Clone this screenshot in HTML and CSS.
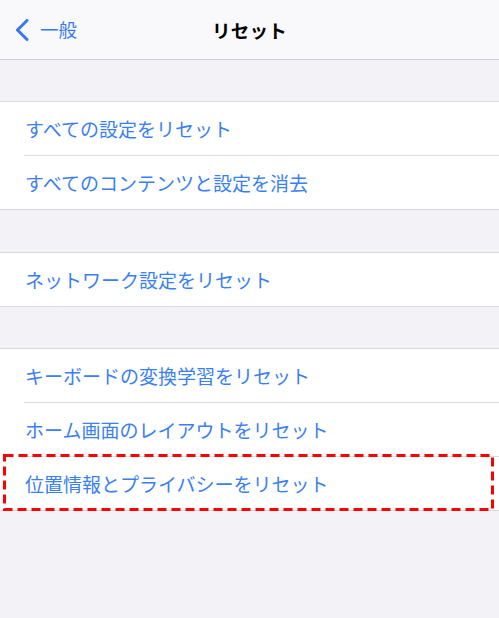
FILE: index.html
```html
<!DOCTYPE html>
<html lang="ja">
<head>
<meta charset="utf-8">
<link rel="stylesheet" href="styles.css">
</head>
<body>
<div class="page">
  <header class="nav">
    <div class="back">
      <svg class="chev" width="14" height="22" viewBox="0 0 14 22"><path d="M12 1.5 L2.5 11 L12 20.5" fill="none" stroke="#3478f6" stroke-width="3" stroke-linecap="round" stroke-linejoin="round"/></svg>
      <span class="back-label">一般</span>
    </div>
    <div class="title">リセット</div>
  </header>
  <div class="gap first"></div>
  <section class="group">
    <div class="row"><span>すべての設定をリセット</span></div>
    <div class="row"><span>すべてのコンテンツと設定を消去</span></div>
  </section>
  <div class="gap"></div>
  <section class="group">
    <div class="row"><span>ネットワーク設定をリセット</span></div>
  </section>
  <div class="gap last"></div>
  <section class="group">
    <div class="row"><span>キーボードの変換学習をリセット</span></div>
    <div class="row"><span>ホーム画面のレイアウトをリセット</span></div>
    <div class="row highlighted"><span>位置情報とプライバシーをリセット</span>
      <svg class="mark" width="491" height="57" viewBox="0 0 491 57"><rect x="1.5" y="1.5" width="488" height="54" fill="none" stroke="#f00" stroke-width="3" stroke-dasharray="9 5"/></svg>
    </div>
  </section>
</div>
</body>
</html>
```

FILE: styles.css
```css
html, body {
  margin: 0;
  padding: 0;
  background: #f2f2f7;
}
.page {
  width: 499px;
  height: 618px;
  overflow: hidden;
  font-family: "Noto Sans CJK JP", "Noto Sans", sans-serif;
  background: #f2f2f7;
}
.nav {
  height: 59px;
  background: #f9f9fb;
  border-bottom: 1px solid #d0d0d4;
  display: flex;
  align-items: center;
  justify-content: center;
  position: relative;
}
.back {
  position: absolute;
  left: 15px;
  top: 0;
  height: 59px;
  display: flex;
  align-items: center;
  gap: 11px;
  color: #3478f6;
  font-size: 18.5px;
}
.chev {
  display: block;
  margin-top: 1px;
}
.back-label {
  line-height: 1;
}
.title {
  font-size: 18.5px;
  font-weight: 700;
  color: #000;
  letter-spacing: 0.3px;
}
.gap {
  height: 42px;
}
.gap.first {
  height: 41px;
}
.gap.last {
  height: 41px;
}
.group {
  background: #fff;
  border-top: 1px solid #d8d8dc;
  border-bottom: 1px solid #d8d8dc;
}
.row {
  height: 53px;
  padding-left: 25px;
  display: flex;
  align-items: center;
  color: #3a80f5;
  font-size: 19px;
  position: relative;
}
.row + .row {
  margin-top: 1px;
}
.row + .row::before {
  content: "";
  position: absolute;
  left: 24px;
  right: 0;
  top: -1px;
  height: 1px;
  background: #dcdce0;
}
.row span {
  line-height: 1;
}
.mark {
  position: absolute;
  left: 3px;
  top: -3px;
  z-index: 2;
}
```
